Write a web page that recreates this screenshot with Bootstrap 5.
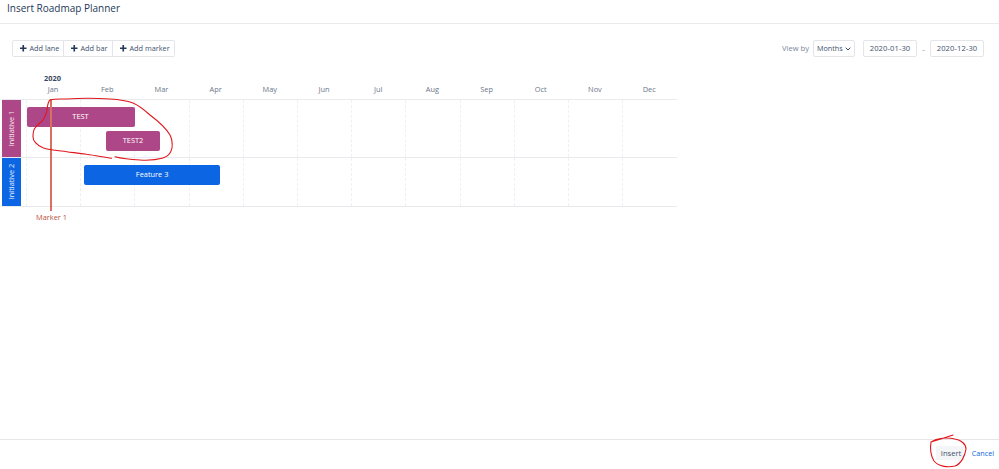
<!DOCTYPE html>
<html lang="en">
<head>
<meta charset="utf-8">
<title>Insert Roadmap Planner</title>
<link href="https://cdn.jsdelivr.net/npm/bootstrap@5.3.0/dist/css/bootstrap.min.css" rel="stylesheet">
<style>
html,body{height:100%;margin:0;overflow:hidden}
body{font-family:"Open Sans","Noto Sans",sans-serif;color:#344563;background:#fff;font-size:8px;position:relative}
.shell{height:469px}
.dlg-head{height:23px;border-bottom:1px solid #e8eaee;padding-left:7px}
.dlg-title{font-size:10px;line-height:14px;margin:1px 0 0;font-weight:400;color:#253858}
.tools{padding:16px 15px 0 12px;height:46px}
.tool-group{display:flex}
.tool-btn{height:17px;border:1px solid #e3e5e9;background:#fff;color:#42526e;font-size:7.3px;padding:0 0 0 7px;display:flex;align-items:center;gap:3px;border-radius:0;border-left:0}
.tool-btn:first-child{border-radius:2px 0 0 2px;border-left:1px solid #e3e5e9;width:52px}
.tool-btn:nth-child(2){width:49px}
.tool-btn:last-child{border-radius:0 2px 2px 0;width:62px}
.plus{width:6.5px;height:6.5px;flex:none}
.view-lbl{color:#7a869a;font-size:7.6px}
.ctl{height:17px;border:1px solid #e3e5e9;border-radius:2px;background:#fff;color:#42526e;font-size:7.6px;display:flex;align-items:center}
.ctl-sel{width:42px;padding:0 3px;justify-content:space-between;font-size:7.2px}
.ctl-date{width:54px;justify-content:center;letter-spacing:.1px}
.dash{width:13px;text-align:center;color:#7a869a}
.chart{margin-left:2px;width:675px}
.years{height:13px;padding-left:42px;padding-top:3px;font-weight:700;color:#344563;font-size:7.4px;line-height:10px}
.months{display:flex;padding-left:24px;height:16px;line-height:12px;color:#6b778c;font-size:7.4px}
.mo{width:54.2px;text-align:center}
.lane{display:flex;position:relative;border-top:1px solid #e8eaee}
.lane-a{height:58px}
.lane-b{height:50px;border-bottom:1px solid #e8eaee}
.lane-tag{width:19px;color:#fff;display:flex;align-items:center;justify-content:center;flex:none;font-size:7.4px}
.lane-tag span{transform:rotate(-90deg);white-space:nowrap;opacity:.9}
.tag-a{background:#ae4787}
.tag-b{background:#0c66e4}
.cells{display:flex;flex:1;padding-left:5px}
.cell{width:54.2px;border-left:1px dashed #eef0f2;flex:none}
.bar{position:absolute;height:20px;border-radius:2px;color:#fff;font-size:7.4px;display:flex;align-items:center;justify-content:center}
.bar-a{background:#ae4787}
.bar-b{background:#0c66e4}
.b1{left:24.5px;top:7px;width:108px}
.b2{left:104px;top:31px;width:54px}
.b3{left:82.3px;top:7px;width:135.7px}
.marker-line{position:absolute;left:50px;top:99px;width:1.5px;height:112px;background:#d9705f}
.marker-lbl{position:absolute;left:36px;top:212px;font-size:7.4px;line-height:11px;color:#b5533f}
.ink{position:absolute;left:0;top:0;pointer-events:none}
.dlg-foot{position:absolute;left:0;right:0;top:439px;height:30px;border-top:1px solid #e4e6ea;padding-right:5px}
.ins-btn{border:0;background:#f4f5f7;color:#42526e;font-size:7.6px;height:14px;padding:0 3px 0 5px;line-height:14px;margin-right:7.5px;margin-top:6px}
.cancel-lnk{color:#0c66e4;font-size:7.2px;text-decoration:none;margin-top:6px;line-height:14px}
</style>
</head>
<body>
<div class="shell">
  <div class="dlg-head"><h1 class="dlg-title">Insert Roadmap Planner</h1></div>
  <div class="tools d-flex justify-content-between align-items-start">
    <div class="tool-group">
      <button class="tool-btn"><svg class="plus" viewBox="0 0 8 8"><path d="M3 0h2v3h3v2H5v3H3V5H0V3h3z" fill="#253858"/></svg>Add lane</button>
      <button class="tool-btn"><svg class="plus" viewBox="0 0 8 8"><path d="M3 0h2v3h3v2H5v3H3V5H0V3h3z" fill="#253858"/></svg>Add bar</button>
      <button class="tool-btn"><svg class="plus" viewBox="0 0 8 8"><path d="M3 0h2v3h3v2H5v3H3V5H0V3h3z" fill="#253858"/></svg>Add marker</button>
    </div>
    <div class="d-flex align-items-center">
      <span class="view-lbl me-1">View by</span>
      <div class="ctl ctl-sel"><span>Months</span><svg width="6" height="4" viewBox="0 0 6 4"><path d="M.7.7 3 3l2.3-2.3" fill="none" stroke="#344563" stroke-width="1"/></svg></div>
      <div class="ctl ctl-date ms-2">2020-01-30</div>
      <div class="dash">-</div>
      <div class="ctl ctl-date">2020-12-30</div>
    </div>
  </div>
  <div class="chart">
    <div class="years">2020</div>
    <div class="months">
      <div class="mo">Jan</div><div class="mo">Feb</div><div class="mo">Mar</div><div class="mo">Apr</div><div class="mo">May</div><div class="mo">Jun</div><div class="mo">Jul</div><div class="mo">Aug</div><div class="mo">Sep</div><div class="mo">Oct</div><div class="mo">Nov</div><div class="mo">Dec</div>
    </div>
    <div class="lane lane-a">
      <div class="lane-tag tag-a"><span>Initiative 1</span></div>
      <div class="cells"><div class="cell"></div><div class="cell"></div><div class="cell"></div><div class="cell"></div><div class="cell"></div><div class="cell"></div><div class="cell"></div><div class="cell"></div><div class="cell"></div><div class="cell"></div><div class="cell"></div><div class="cell"></div></div>
      <div class="bar bar-a b1">TEST</div>
      <div class="bar bar-a b2">TEST2</div>
    </div>
    <div class="lane lane-b">
      <div class="lane-tag tag-b"><span>Initiative 2</span></div>
      <div class="cells"><div class="cell"></div><div class="cell"></div><div class="cell"></div><div class="cell"></div><div class="cell"></div><div class="cell"></div><div class="cell"></div><div class="cell"></div><div class="cell"></div><div class="cell"></div><div class="cell"></div><div class="cell"></div></div>
      <div class="bar bar-b b3">Feature 3</div>
    </div>
  </div>
  <div class="marker-line"></div>
  <div class="marker-lbl">Marker 1</div>
  <div class="dlg-foot d-flex justify-content-end align-items-start">
    <button class="ins-btn">Insert</button>
    <a class="cancel-lnk" href="#">Cancel</a>
  </div>
  <svg class="ink" width="999" height="469" viewBox="0 0 999 469" fill="none" stroke="#e0161b" stroke-width="1.1" stroke-linecap="round" stroke-linejoin="round">
    <path d="M111.5 158.3C103 157 95 155.500 86.700 154.300C79 153 72 152.500 66.700 151.700C57 150.500 49 150 43 147.700C37 145 33 141 33 136.700C33 132.500 33.500 130 35 128C37 124.500 41 123 43 120C45 117 46 114.500 46.700 111.700C47.500 107 47.500 102 50 100C55 98.500 60 99 66.700 99C80 98 96 98 110 99C118 99.500 126 100.500 133 103C140 106 145 110.500 150 115C158 121 166 128 170 135C172 139 172.500 144 172 148C171 153 168 156.500 163 158C156 160 148 160.500 140 160C131 159.500 122 158.500 115 156.700"/>
    <path d="M931 442C930 448 931 456 934 461C938 466 947 468 955 466C961 464 965 456 966 449C966 444 961 440 955 439C947 437 937 438 931 442C938 440 947 437 953 435"/>
  </svg>
</div>
</body>
</html>
